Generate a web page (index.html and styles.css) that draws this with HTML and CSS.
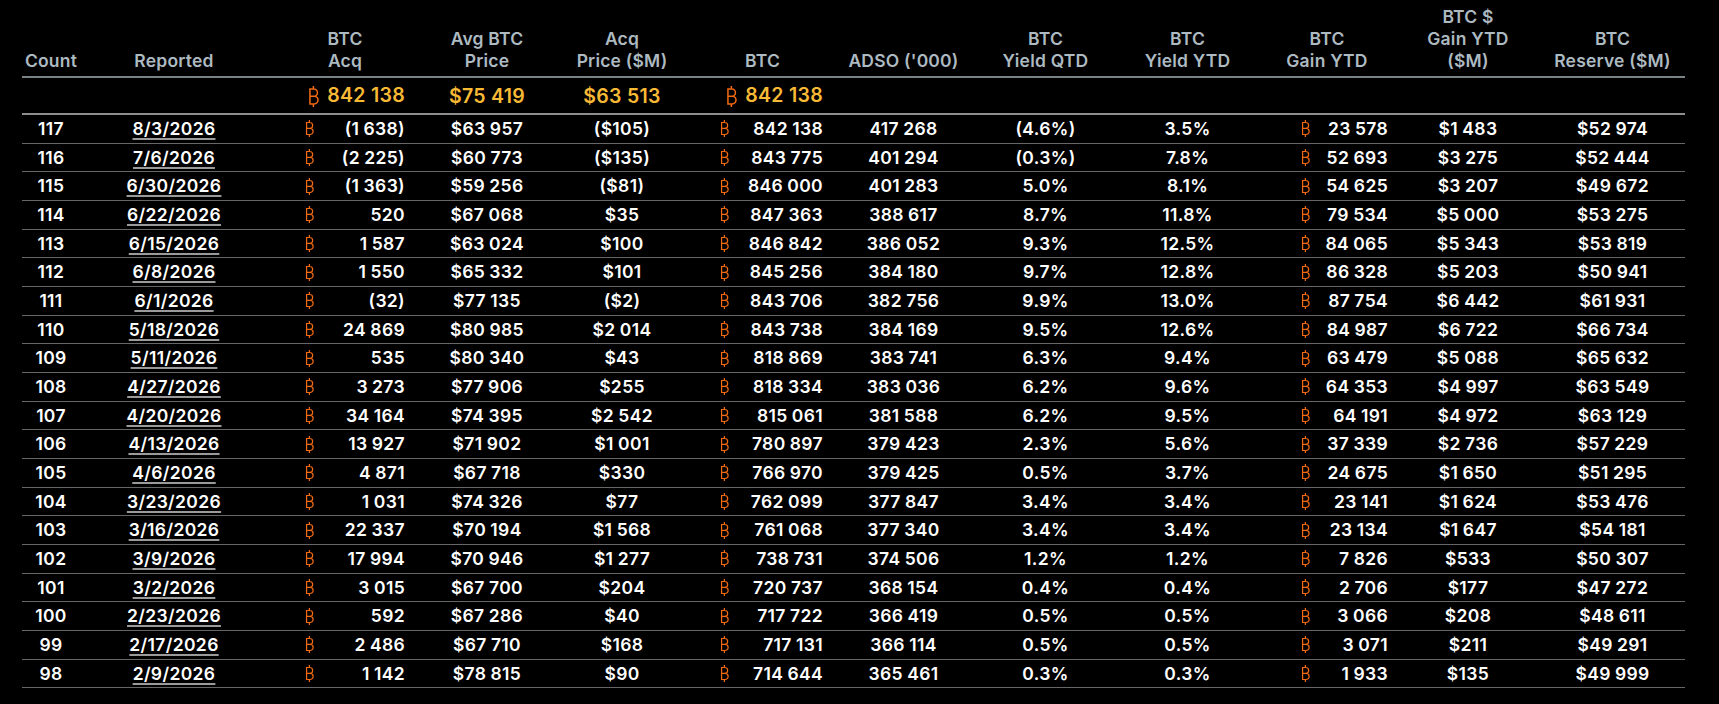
FILE: index.html
```html
<!DOCTYPE html>
<html lang="en">
<head>
<meta charset="utf-8">
<title>BTC Holdings</title>
<link rel="stylesheet" href="styles.css">
</head>
<body>
<svg class="defs" width="0" height="0" aria-hidden="true">
  <symbol id="b" viewBox="0 0 10 18">
    <path d="M1.65 2V16M1 2.65H5A3.075 3.075 0 0 1 5 8.8H1.65M1.65 8.8H5.3A3.275 3.275 0 0 1 5.3 15.35H1M4.6 0V2.65M4.6 15.35V18" fill="none" stroke="currentColor" stroke-width="1.3"/>
  </symbol>
</svg>
<div class="wrap">
<table class="grid">
  <colgroup>
    <col class="w1"><col class="w2"><col class="w3"><col class="w4"><col class="w5"><col class="w6">
    <col class="w7"><col class="w8"><col class="w9"><col class="w10"><col class="w11"><col class="w12">
  </colgroup>
  <thead>
    <tr>
      <th>Count</th>
      <th>Reported</th>
      <th>BTC<br>Acq</th>
      <th>Avg BTC<br>Price</th>
      <th>Acq<br>Price ($M)</th>
      <th>BTC</th>
      <th>ADSO ('000)</th>
      <th>BTC<br>Yield QTD</th>
      <th>BTC<br>Yield YTD</th>
      <th>BTC<br>Gain YTD</th>
      <th>BTC $<br>Gain YTD<br>($M)</th>
      <th>BTC<br>Reserve ($M)</th>
    </tr>
    <tr class="tot">
      <td></td>
      <td></td>
      <td class="c3 r"><svg class="b bt"><use href="#b"/></svg>842 138</td>
      <td>$75 419</td>
      <td>$63 513</td>
      <td class="c6 r"><svg class="b bt"><use href="#b"/></svg>842 138</td>
      <td></td><td></td><td></td><td></td><td></td><td></td>
    </tr>
  </thead>
  <tbody>
    <tr><td>117</td><td><a class="d">8/3/2026</a></td><td class="c3"><div class="bx"><svg class="b"><use href="#b"/></svg><span>(1 638)</span></div></td><td>$63 957</td><td>($105)</td><td class="c6"><div class="bx"><svg class="b"><use href="#b"/></svg><span>842 138</span></div></td><td>417 268</td><td>(4.6%)</td><td>3.5%</td><td class="c10"><div class="bx"><svg class="b"><use href="#b"/></svg><span>23 578</span></div></td><td>$1 483</td><td>$52 974</td></tr>
    <tr><td>116</td><td><a class="d">7/6/2026</a></td><td class="c3"><div class="bx"><svg class="b"><use href="#b"/></svg><span>(2 225)</span></div></td><td>$60 773</td><td>($135)</td><td class="c6"><div class="bx"><svg class="b"><use href="#b"/></svg><span>843 775</span></div></td><td>401 294</td><td>(0.3%)</td><td>7.8%</td><td class="c10"><div class="bx"><svg class="b"><use href="#b"/></svg><span>52 693</span></div></td><td>$3 275</td><td>$52 444</td></tr>
    <tr><td>115</td><td><a class="d">6/30/2026</a></td><td class="c3"><div class="bx"><svg class="b"><use href="#b"/></svg><span>(1 363)</span></div></td><td>$59 256</td><td>($81)</td><td class="c6"><div class="bx"><svg class="b"><use href="#b"/></svg><span>846 000</span></div></td><td>401 283</td><td>5.0%</td><td>8.1%</td><td class="c10"><div class="bx"><svg class="b"><use href="#b"/></svg><span>54 625</span></div></td><td>$3 207</td><td>$49 672</td></tr>
    <tr><td>114</td><td><a class="d">6/22/2026</a></td><td class="c3"><div class="bx"><svg class="b"><use href="#b"/></svg><span>520</span></div></td><td>$67 068</td><td>$35</td><td class="c6"><div class="bx"><svg class="b"><use href="#b"/></svg><span>847 363</span></div></td><td>388 617</td><td>8.7%</td><td>11.8%</td><td class="c10"><div class="bx"><svg class="b"><use href="#b"/></svg><span>79 534</span></div></td><td>$5 000</td><td>$53 275</td></tr>
    <tr><td>113</td><td><a class="d">6/15/2026</a></td><td class="c3"><div class="bx"><svg class="b"><use href="#b"/></svg><span>1 587</span></div></td><td>$63 024</td><td>$100</td><td class="c6"><div class="bx"><svg class="b"><use href="#b"/></svg><span>846 842</span></div></td><td>386 052</td><td>9.3%</td><td>12.5%</td><td class="c10"><div class="bx"><svg class="b"><use href="#b"/></svg><span>84 065</span></div></td><td>$5 343</td><td>$53 819</td></tr>
    <tr><td>112</td><td><a class="d">6/8/2026</a></td><td class="c3"><div class="bx"><svg class="b"><use href="#b"/></svg><span>1 550</span></div></td><td>$65 332</td><td>$101</td><td class="c6"><div class="bx"><svg class="b"><use href="#b"/></svg><span>845 256</span></div></td><td>384 180</td><td>9.7%</td><td>12.8%</td><td class="c10"><div class="bx"><svg class="b"><use href="#b"/></svg><span>86 328</span></div></td><td>$5 203</td><td>$50 941</td></tr>
    <tr><td>111</td><td><a class="d">6/1/2026</a></td><td class="c3"><div class="bx"><svg class="b"><use href="#b"/></svg><span>(32)</span></div></td><td>$77 135</td><td>($2)</td><td class="c6"><div class="bx"><svg class="b"><use href="#b"/></svg><span>843 706</span></div></td><td>382 756</td><td>9.9%</td><td>13.0%</td><td class="c10"><div class="bx"><svg class="b"><use href="#b"/></svg><span>87 754</span></div></td><td>$6 442</td><td>$61 931</td></tr>
    <tr><td>110</td><td><a class="d">5/18/2026</a></td><td class="c3"><div class="bx"><svg class="b"><use href="#b"/></svg><span>24 869</span></div></td><td>$80 985</td><td>$2 014</td><td class="c6"><div class="bx"><svg class="b"><use href="#b"/></svg><span>843 738</span></div></td><td>384 169</td><td>9.5%</td><td>12.6%</td><td class="c10"><div class="bx"><svg class="b"><use href="#b"/></svg><span>84 987</span></div></td><td>$6 722</td><td>$66 734</td></tr>
    <tr><td>109</td><td><a class="d">5/11/2026</a></td><td class="c3"><div class="bx"><svg class="b"><use href="#b"/></svg><span>535</span></div></td><td>$80 340</td><td>$43</td><td class="c6"><div class="bx"><svg class="b"><use href="#b"/></svg><span>818 869</span></div></td><td>383 741</td><td>6.3%</td><td>9.4%</td><td class="c10"><div class="bx"><svg class="b"><use href="#b"/></svg><span>63 479</span></div></td><td>$5 088</td><td>$65 632</td></tr>
    <tr><td>108</td><td><a class="d">4/27/2026</a></td><td class="c3"><div class="bx"><svg class="b"><use href="#b"/></svg><span>3 273</span></div></td><td>$77 906</td><td>$255</td><td class="c6"><div class="bx"><svg class="b"><use href="#b"/></svg><span>818 334</span></div></td><td>383 036</td><td>6.2%</td><td>9.6%</td><td class="c10"><div class="bx"><svg class="b"><use href="#b"/></svg><span>64 353</span></div></td><td>$4 997</td><td>$63 549</td></tr>
    <tr><td>107</td><td><a class="d">4/20/2026</a></td><td class="c3"><div class="bx"><svg class="b"><use href="#b"/></svg><span>34 164</span></div></td><td>$74 395</td><td>$2 542</td><td class="c6"><div class="bx"><svg class="b"><use href="#b"/></svg><span>815 061</span></div></td><td>381 588</td><td>6.2%</td><td>9.5%</td><td class="c10"><div class="bx"><svg class="b"><use href="#b"/></svg><span>64 191</span></div></td><td>$4 972</td><td>$63 129</td></tr>
    <tr><td>106</td><td><a class="d">4/13/2026</a></td><td class="c3"><div class="bx"><svg class="b"><use href="#b"/></svg><span>13 927</span></div></td><td>$71 902</td><td>$1 001</td><td class="c6"><div class="bx"><svg class="b"><use href="#b"/></svg><span>780 897</span></div></td><td>379 423</td><td>2.3%</td><td>5.6%</td><td class="c10"><div class="bx"><svg class="b"><use href="#b"/></svg><span>37 339</span></div></td><td>$2 736</td><td>$57 229</td></tr>
    <tr><td>105</td><td><a class="d">4/6/2026</a></td><td class="c3"><div class="bx"><svg class="b"><use href="#b"/></svg><span>4 871</span></div></td><td>$67 718</td><td>$330</td><td class="c6"><div class="bx"><svg class="b"><use href="#b"/></svg><span>766 970</span></div></td><td>379 425</td><td>0.5%</td><td>3.7%</td><td class="c10"><div class="bx"><svg class="b"><use href="#b"/></svg><span>24 675</span></div></td><td>$1 650</td><td>$51 295</td></tr>
    <tr><td>104</td><td><a class="d">3/23/2026</a></td><td class="c3"><div class="bx"><svg class="b"><use href="#b"/></svg><span>1 031</span></div></td><td>$74 326</td><td>$77</td><td class="c6"><div class="bx"><svg class="b"><use href="#b"/></svg><span>762 099</span></div></td><td>377 847</td><td>3.4%</td><td>3.4%</td><td class="c10"><div class="bx"><svg class="b"><use href="#b"/></svg><span>23 141</span></div></td><td>$1 624</td><td>$53 476</td></tr>
    <tr><td>103</td><td><a class="d">3/16/2026</a></td><td class="c3"><div class="bx"><svg class="b"><use href="#b"/></svg><span>22 337</span></div></td><td>$70 194</td><td>$1 568</td><td class="c6"><div class="bx"><svg class="b"><use href="#b"/></svg><span>761 068</span></div></td><td>377 340</td><td>3.4%</td><td>3.4%</td><td class="c10"><div class="bx"><svg class="b"><use href="#b"/></svg><span>23 134</span></div></td><td>$1 647</td><td>$54 181</td></tr>
    <tr><td>102</td><td><a class="d">3/9/2026</a></td><td class="c3"><div class="bx"><svg class="b"><use href="#b"/></svg><span>17 994</span></div></td><td>$70 946</td><td>$1 277</td><td class="c6"><div class="bx"><svg class="b"><use href="#b"/></svg><span>738 731</span></div></td><td>374 506</td><td>1.2%</td><td>1.2%</td><td class="c10"><div class="bx"><svg class="b"><use href="#b"/></svg><span>7 826</span></div></td><td>$533</td><td>$50 307</td></tr>
    <tr><td>101</td><td><a class="d">3/2/2026</a></td><td class="c3"><div class="bx"><svg class="b"><use href="#b"/></svg><span>3 015</span></div></td><td>$67 700</td><td>$204</td><td class="c6"><div class="bx"><svg class="b"><use href="#b"/></svg><span>720 737</span></div></td><td>368 154</td><td>0.4%</td><td>0.4%</td><td class="c10"><div class="bx"><svg class="b"><use href="#b"/></svg><span>2 706</span></div></td><td>$177</td><td>$47 272</td></tr>
    <tr><td>100</td><td><a class="d">2/23/2026</a></td><td class="c3"><div class="bx"><svg class="b"><use href="#b"/></svg><span>592</span></div></td><td>$67 286</td><td>$40</td><td class="c6"><div class="bx"><svg class="b"><use href="#b"/></svg><span>717 722</span></div></td><td>366 419</td><td>0.5%</td><td>0.5%</td><td class="c10"><div class="bx"><svg class="b"><use href="#b"/></svg><span>3 066</span></div></td><td>$208</td><td>$48 611</td></tr>
    <tr><td>99</td><td><a class="d">2/17/2026</a></td><td class="c3"><div class="bx"><svg class="b"><use href="#b"/></svg><span>2 486</span></div></td><td>$67 710</td><td>$168</td><td class="c6"><div class="bx"><svg class="b"><use href="#b"/></svg><span>717 131</span></div></td><td>366 114</td><td>0.5%</td><td>0.5%</td><td class="c10"><div class="bx"><svg class="b"><use href="#b"/></svg><span>3 071</span></div></td><td>$211</td><td>$49 291</td></tr>
    <tr><td>98</td><td><a class="d">2/9/2026</a></td><td class="c3"><div class="bx"><svg class="b"><use href="#b"/></svg><span>1 142</span></div></td><td>$78 815</td><td>$90</td><td class="c6"><div class="bx"><svg class="b"><use href="#b"/></svg><span>714 644</span></div></td><td>365 461</td><td>0.3%</td><td>0.3%</td><td class="c10"><div class="bx"><svg class="b"><use href="#b"/></svg><span>1 933</span></div></td><td>$135</td><td>$49 999</td></tr>
  </tbody>
</table>
</div>
</body>
</html>
```

FILE: styles.css
```css
html, body {
  margin: 0;
  background: #000;
}
body {
  font-family: Inter, "Liberation Sans", sans-serif;
  color: #fff;
}
.defs {
  position: absolute;
  width: 0;
  height: 0;
  overflow: hidden;
}
.wrap {
  padding-left: 22px;
}
.grid {
  width: 1663px;
  border-collapse: collapse;
  table-layout: fixed;
}
.w1 { width: 58px; }
.w2 { width: 188px; }
.w3 { width: 154px; }
.w4 { width: 130px; }
.w5 { width: 140px; }
.w6 { width: 141px; }
.w7 { width: 141px; }
.w8 { width: 143px; }
.w9 { width: 141px; }
.w10 { width: 138px; }
.w11 { width: 144px; }
.w12 { width: 145px; }

.grid th {
  color: #adbac1;
  font-weight: 600;
  font-size: 17.5px;
  letter-spacing: 0.2px;
  line-height: 22px;
  text-align: center;
  vertical-align: bottom;
  padding: 6px 0 4px;
  border-bottom: 2px solid #7b8286;
}
.grid td {
  padding: 0;
  text-align: center;
  white-space: nowrap;
  font-weight: 600;
}
.tot td {
  height: 35px;
  font-size: 19.5px;
  letter-spacing: 0.3px;
  color: #f8b935;
  border-bottom: 2px solid #8e8e8e;
}
.tot .r {
  text-align: right;
}
.tot .c3 { padding-right: 17px; }
.tot .c6 { padding-right: 10px; }
.grid tbody td {
  font-size: 17.5px;
  letter-spacing: 0.35px;
  word-spacing: -0.5px;
  line-height: 27.67px;
  height: 27.67px;
  border-bottom: 1px solid #676767;
}
.d {
  color: #fff;
  text-decoration: underline;
  text-decoration-color: #9a9a9a;
  text-decoration-thickness: 1.5px;
  text-underline-offset: 3px;
}
.b {
  width: 9.5px;
  height: 17px;
  color: #f26a12;
  vertical-align: middle;
}
.bt {
  width: 11.7px;
  height: 21px;
  margin-right: 8px;
  position: relative;
  top: -1px;
}
.bx {
  display: flex;
  justify-content: space-between;
  align-items: center;
}
.c3 .bx { padding: 0 17px 0 37px; }
.c6 .bx { padding: 0 10px 0 28px; }
.c10 .bx { padding: 0 8px 0 43px; }
```
